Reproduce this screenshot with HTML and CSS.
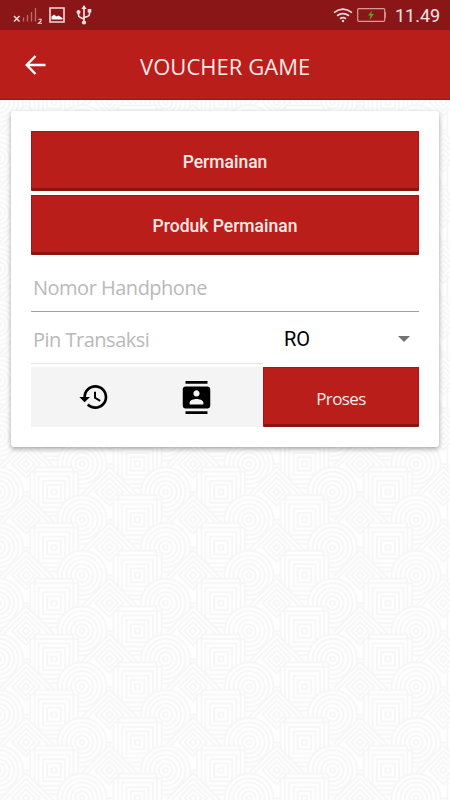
FILE: index.html
```html
<!DOCTYPE html>
<html lang="id">
<head>
    <meta charset="UTF-8">
    <meta name="viewport" content="width=device-width, initial-scale=1.0">
    <title>Voucher Game</title>
    <link rel="stylesheet" href="styles.css">
</head>
<body>
    <svg class="backdrop" width="450" height="800" aria-hidden="true">
        <defs>
            <g id="circle">
                <circle r="24.5"/><circle r="20"/><circle r="15.6"/><circle r="11.2"/><circle r="6.8"/><circle r="2.5"/>
            </g>
            <g id="diamond">
                <path d="M0-25L28 3V28H-28V3z"/>
                <path d="M0-19.5L28 8.5V28H-28V8.5z"/>
                <path d="M0-14L14 0L0 14L-14 0z"/>
                <path d="M0-8.7L8.7 0L0 8.7L-8.7 0z"/>
                <path d="M0-3.5L3.5 0L0 3.5L-3.5 0z"/>
            </g>
            <g id="square">
                <path d="M-19-24.5H19V-20H24V24H-24V-20H-19z"/>
                <path d="M-19.5-20H19.5V20H-19.5z"/>
                <path d="M-15.5-15.5H15.5V15.5H-15.5z"/>
                <path d="M-11-11H11V11H-11z"/>
                <path d="M-6.8-6.8H6.8V6.8H-6.8z"/>
                <path d="M-2.5-2.5H2.5V2.5H-2.5z"/>
            </g>
            <g id="even">
                <use href="#diamond" x="26"/>
                <use href="#square" x="137.5"/>
                <use href="#circle" x="82"/>
            </g>
            <g id="odd">
                <use href="#diamond" x="109.5"/>
                <use href="#square" x="54"/>
                <use href="#circle" x="-1.5"/>
                <use href="#circle" x="165.5"/>
            </g>
            <pattern id="tiles" y="46.2" width="167" height="55.7" patternUnits="userSpaceOnUse">
                <g class="line">
                    <use href="#even" y="-27.9"/>
                    <use href="#odd" y="0"/>
                    <use href="#even" y="27.8"/>
                    <use href="#odd" y="55.7"/>
                    <use href="#even" y="83.5"/>
                </g>
            </pattern>
        </defs>
        <rect width="450" height="800" fill="url(#tiles)"/>
    </svg>

    <div class="status-bar">
        <svg class="signal" width="30" height="18" viewBox="0 0 30 18">
            <path d="M1 10l5.500 5.500M6.500 10l-5.500 5.500" stroke="#f3dada" stroke-width="1.5"/>
            <path d="M10.500 15.500v-4M14.500 15.500V9M18.500 15.500V6M22.500 15.500V2" stroke="#bd6c6c" stroke-width="1.300"/>
            <path d="M25.500 13.300h2.500v1.700l-2.500 2.300h3.500" fill="none" stroke="#f3dada" stroke-width="1.100"/>
        </svg>
        <svg class="picture" width="16" height="16" viewBox="0 0 16 16">
            <path d="M1 1h14v14H1z" fill="none" stroke="#f3dada" stroke-width="1.600"/>
            <path d="M2.500 12.500V9.500l2.500-2 2.500 2 2-1 4 2.500v1.500z" fill="#fff"/>
        </svg>
        <svg class="usb" width="16" height="20" viewBox="0 0 16 20">
            <path d="M8 18V3M2.500 7v3q0 2 2 2.500L8 14M13.500 6v3q0 2-2 2.500L8 12.500" fill="none" stroke="#f9e5e5" stroke-width="1.600"/>
            <path d="M8 0l2.600 4H5.400zM11.700 4h3.600v3.500h-3.600z" fill="#f9e5e5"/>
            <circle cx="2.500" cy="7" r="2" fill="#f9e5e5"/>
            <circle cx="8" cy="17.500" r="2.100" fill="#f9e5e5"/>
        </svg>
        <svg class="wifi" width="20" height="15" viewBox="0 0 20 15">
            <path d="M1 4.600q9-6.800 18 0M4 7.800q6-4.400 12 0M7 10.700q3-2 6 0" fill="none" stroke="#f3dada" stroke-width="1.700"/>
            <circle cx="10" cy="13" r="1.200" fill="#f3dada"/>
        </svg>
        <svg class="battery" width="30" height="14" viewBox="0 0 30 14">
            <rect x=".7" y=".7" width="27" height="12.600" rx="1" fill="none" stroke="#d99a98" stroke-width="1.200"/>
            <path d="M28.400 4v6" stroke="#d99a98"/>
            <path d="M15 2.500l-4 5h2.500l-1 4.500 4.500-6h-2.700z" fill="#55a520"/>
        </svg>
        <span class="clock">11.49</span>
    </div>

    <header class="toolbar">
        <svg class="back" width="22" height="22" viewBox="0 0 22 22">
            <path d="M20.500 11H2.500M10.500 2L1.700 11l8.800 9" fill="none" stroke="#fff" stroke-width="2.400"/>
        </svg>
        <h1>VOUCHER GAME</h1>
    </header>

    <form class="card">
        <button type="button" class="btn">Permainan</button>
        <button type="button" class="btn">Produk Permainan</button>
        <input type="text" class="phone" placeholder="Nomor Handphone">
        <div class="row">
            <input type="text" class="pin" placeholder="Pin Transaksi">
            <div class="select">
                <span>RO</span>
                <svg width="12" height="6" viewBox="0 0 12 6"><path d="M0 0h12L6 6z" fill="#737373"/></svg>
            </div>
        </div>
        <div class="actions">
            <div class="tools">
                <svg width="32" height="32" viewBox="0 0 24 24">
                    <path d="M13 3c-4.970 0-9 4.030-9 9H1l3.890 3.890.070.140L9 12H6c0-3.870 3.130-7 7-7s7 3.130 7 7-3.130 7-7 7c-1.930 0-3.680-.790-4.940-2.060l-1.420 1.420C8.270 19.990 10.510 21 13 21c4.970 0 9-4.030 9-9s-4.030-9-9-9zm-1 5v5l4.280 2.540.720-1.210-3.500-2.080V8H12z"/>
                </svg>
                <svg width="33" height="33" viewBox="0 0 24 24">
                    <path d="M20 0H4v2h16V0zM4 24h16v-2H4v2zM20 4H4c-1.100 0-2 .900-2 2v12c0 1.100.900 2 2 2h16c1.100 0 2-.900 2-2V6c0-1.100-.900-2-2-2zm-8 2.750c1.240 0 2.250 1.010 2.250 2.250s-1.010 2.250-2.250 2.250S9.750 10.240 9.750 9 10.760 6.750 12 6.750zM17 17H7v-1.500c0-1.670 3.330-2.500 5-2.500s5 .830 5 2.500V17z"/>
                </svg>
            </div>
            <button type="button" class="btn submit">Proses</button>
        </div>
    </form>
</body>
</html>
```

FILE: styles.css
```css
* {
    box-sizing: border-box;
}
body {
    margin: 0;
    height: 800px;
    overflow: hidden;
    background: #fdfdfd;
    font-family: "Open Sans", sans-serif;
}
.backdrop {
    position: absolute;
    top: 0;
    left: 0;
    z-index: -1;
}
.line {
    fill: #fdfefd;
    stroke: #f5f6f5;
    stroke-width: 1.7;
}
.status-bar {
    display: flex;
    align-items: center;
    height: 30px;
    padding: 0 11px 0 13px;
    background: #8a1617;
}
.picture {
    margin-left: 6px;
}
.usb {
    margin-left: 11px;
}
.wifi {
    margin-left: auto;
}
.battery {
    margin-left: 4px;
}
.clock {
    width: 44px;
    margin-left: 8px;
    padding-top: 2px;
    color: #f9e5e5;
    font: 18px/30px Roboto, sans-serif;
    white-space: nowrap;
}
.toolbar {
    display: flex;
    align-items: center;
    height: 70px;
    padding-left: 25px;
    background: #ba1e1b;
    border-bottom: 1px solid #a51614;
}
h1 {
    margin: 2px 0 0 93px;
    color: #fbe9e8;
    font-size: 22px;
    font-weight: 400;
    line-height: 30px;
    letter-spacing: 0.05px;
    white-space: nowrap;
}
.card {
    display: flex;
    flex-direction: column;
    height: 336px;
    margin: 11px 11px 0;
    padding: 20px 20px 0;
    background: #fff;
    border-radius: 3px;
    box-shadow: 0 2px 5px rgba(0, 0, 0, 0.35);
}
.btn {
    flex-shrink: 0;
    height: 60px;
    margin: 0 0 4px;
    padding: 3px 0 0;
    border: 1px solid #a51614;
    border-bottom: 3px solid #8c1210;
    border-radius: 1px;
    background: #ba1e1b;
    color: #fbe9e8;
    font: 500 17.5px Roboto, sans-serif;
}
input {
    padding: 0 2px;
    border: 0;
    background: none;
    color: #000;
    font: 20px "Open Sans", sans-serif;
    letter-spacing: -0.5px;
    outline: none;
}
input::placeholder {
    color: #b9b9b9;
}
.phone {
    height: 53px;
    padding-top: 5px;
    border-bottom: 1px solid #a99f94;
}
.row {
    display: flex;
    height: 52px;
}
.pin {
    width: 232px;
    padding-top: 3px;
    border-bottom: 1px solid #e6e6e6;
}
.select {
    display: flex;
    flex: 1;
    align-items: center;
    justify-content: space-between;
    padding: 2px 9px 0 21px;
    font: 20px Roboto, sans-serif;
}
.actions {
    display: flex;
    height: 60px;
    margin-top: 3px;
}
.tools {
    display: flex;
    align-items: center;
    width: 232px;
    padding-left: 47px;
    gap: 70px;
    background: #f4f4f4;
}
.submit {
    flex: 1;
    padding-top: 4px;
    font: 17px "Open Sans", sans-serif;
    letter-spacing: -0.6px;
}
```
